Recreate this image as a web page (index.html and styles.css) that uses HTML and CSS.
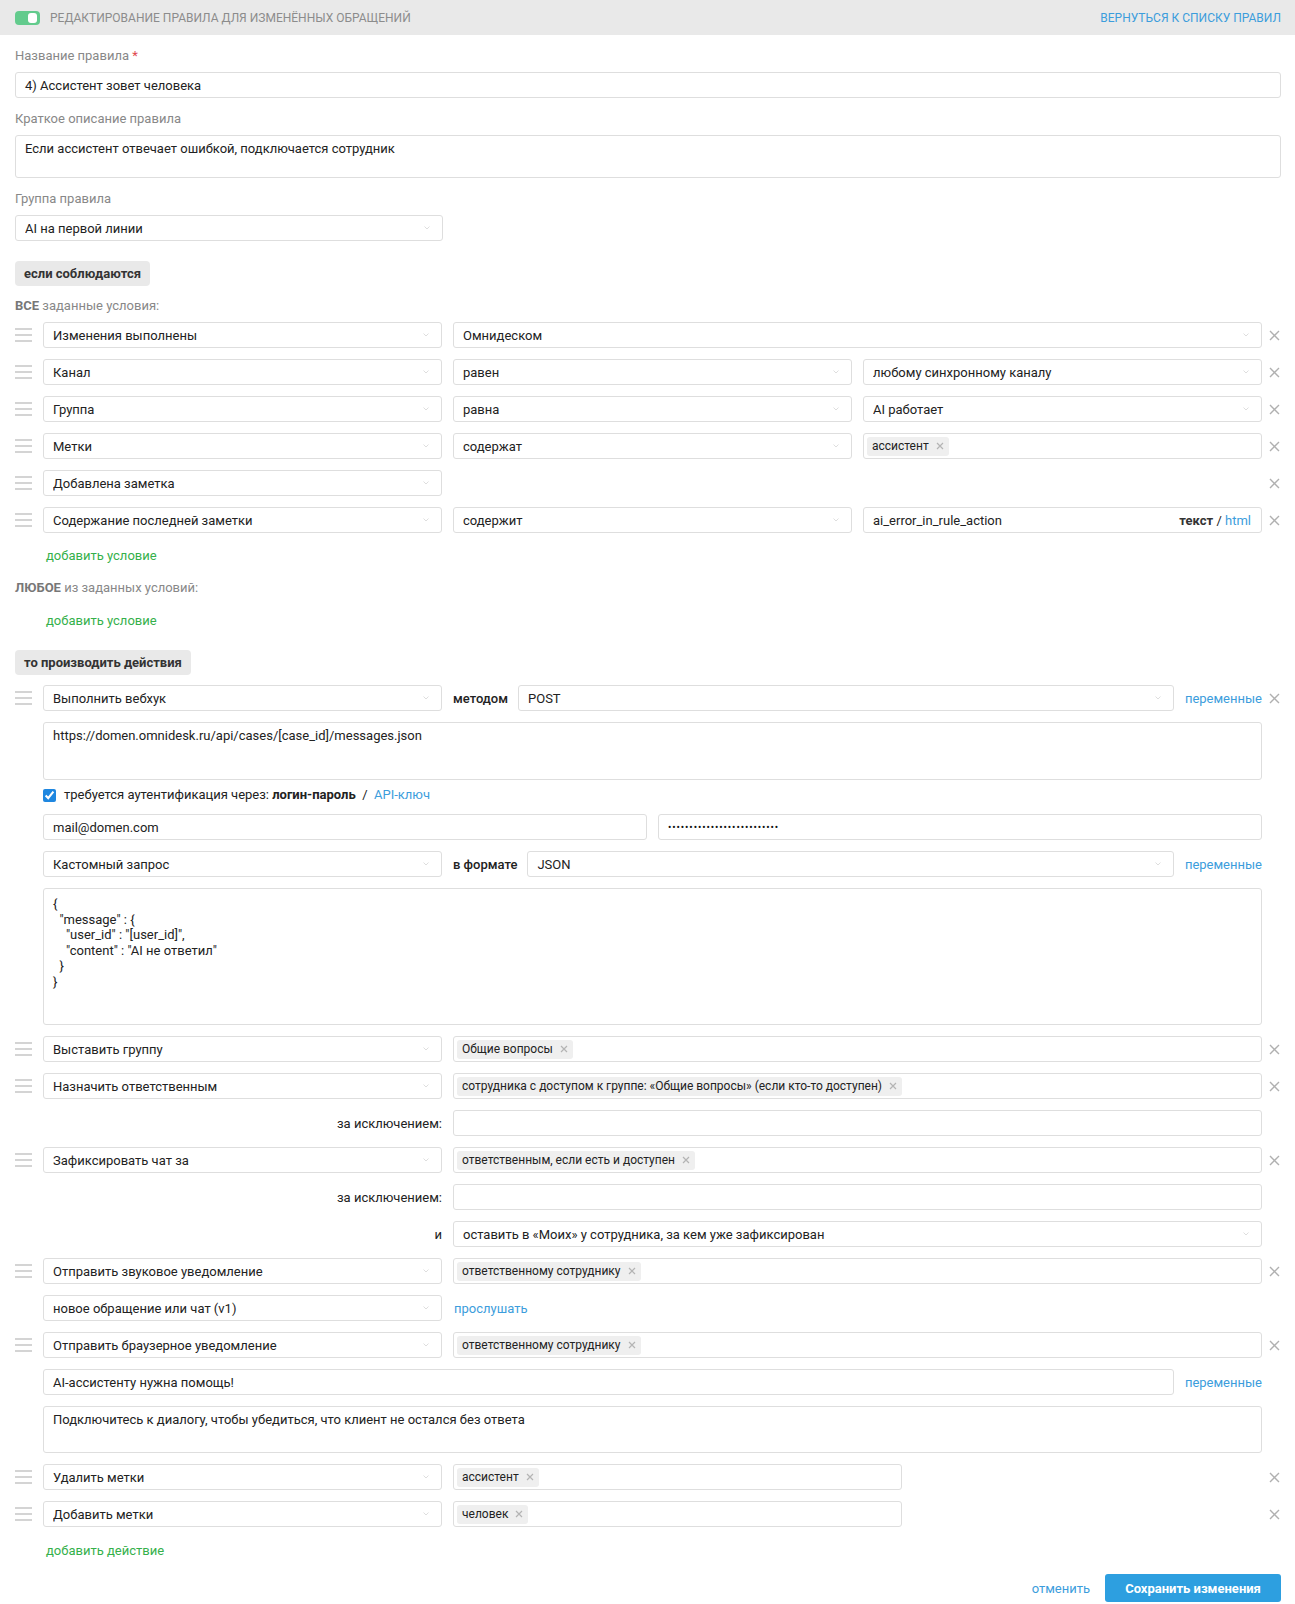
FILE: index.html
```html
<!DOCTYPE html>
<html lang="ru">
<head>
<meta charset="utf-8">
<title>Редактирование правила</title>
<link rel="stylesheet" href="styles.css">
</head>
<body>
<header class="topbar">
  <div class="topbar-left">
    <span class="toggle"></span>
    <span class="title">Редактирование правила для изменённых обращений</span>
  </div>
  <a class="back" href="#">Вернуться к списку правил</a>
</header>

<main class="page">
  <div class="label first">Название правила <span class="req">*</span></div>
  <div class="box">4) Ассистент зовет человека</div>

  <div class="label">Краткое описание правила</div>
  <div class="box area area-desc">Если ассистент отвечает ошибкой, подключается сотрудник</div>

  <div class="label">Группа правила</div>
  <div class="box select group-select"><span>AI на первой линии</span><svg class="chev" width="6" height="4" viewBox="0 0 6 4"><path d="M0.5 0.5L3 3L5.5 0.5"/></svg></div>

  <div class="badge badge-if">если соблюдаются</div>
  <div class="sub-label"><b>ВСЕ</b> заданные условия:</div>

  <div class="row row-first">
    <div class="handle"><i></i><i></i><i></i></div>
    <div class="cols">
      <div class="box select"><span>Изменения выполнены</span><svg class="chev" width="6" height="4" viewBox="0 0 6 4"><path d="M0.5 0.5L3 3L5.5 0.5"/></svg></div>
      <div class="box select span2"><span>Омнидеском</span><svg class="chev" width="6" height="4" viewBox="0 0 6 4"><path d="M0.5 0.5L3 3L5.5 0.5"/></svg></div>
    </div>
    <div class="rm"><svg width="11" height="11" viewBox="0 0 11 11"><path d="M1 1L10 10M10 1L1 10"/></svg></div>
  </div>

  <div class="row">
    <div class="handle"><i></i><i></i><i></i></div>
    <div class="cols">
      <div class="box select"><span>Канал</span><svg class="chev" width="6" height="4" viewBox="0 0 6 4"><path d="M0.5 0.5L3 3L5.5 0.5"/></svg></div>
      <div class="box select"><span>равен</span><svg class="chev" width="6" height="4" viewBox="0 0 6 4"><path d="M0.5 0.5L3 3L5.5 0.5"/></svg></div>
      <div class="box select"><span>любому синхронному каналу</span><svg class="chev" width="6" height="4" viewBox="0 0 6 4"><path d="M0.5 0.5L3 3L5.5 0.5"/></svg></div>
    </div>
    <div class="rm"><svg width="11" height="11" viewBox="0 0 11 11"><path d="M1 1L10 10M10 1L1 10"/></svg></div>
  </div>

  <div class="row">
    <div class="handle"><i></i><i></i><i></i></div>
    <div class="cols">
      <div class="box select"><span>Группа</span><svg class="chev" width="6" height="4" viewBox="0 0 6 4"><path d="M0.5 0.5L3 3L5.5 0.5"/></svg></div>
      <div class="box select"><span>равна</span><svg class="chev" width="6" height="4" viewBox="0 0 6 4"><path d="M0.5 0.5L3 3L5.5 0.5"/></svg></div>
      <div class="box select"><span>AI работает</span><svg class="chev" width="6" height="4" viewBox="0 0 6 4"><path d="M0.5 0.5L3 3L5.5 0.5"/></svg></div>
    </div>
    <div class="rm"><svg width="11" height="11" viewBox="0 0 11 11"><path d="M1 1L10 10M10 1L1 10"/></svg></div>
  </div>

  <div class="row">
    <div class="handle"><i></i><i></i><i></i></div>
    <div class="cols">
      <div class="box select"><span>Метки</span><svg class="chev" width="6" height="4" viewBox="0 0 6 4"><path d="M0.5 0.5L3 3L5.5 0.5"/></svg></div>
      <div class="box select"><span>содержат</span><svg class="chev" width="6" height="4" viewBox="0 0 6 4"><path d="M0.5 0.5L3 3L5.5 0.5"/></svg></div>
      <div class="box tags"><span class="tag">ассистент<svg width="8" height="8" viewBox="0 0 8 8"><path d="M1 1L7 7M7 1L1 7"/></svg></span></div>
    </div>
    <div class="rm"><svg width="11" height="11" viewBox="0 0 11 11"><path d="M1 1L10 10M10 1L1 10"/></svg></div>
  </div>

  <div class="row">
    <div class="handle"><i></i><i></i><i></i></div>
    <div class="cols">
      <div class="box select"><span>Добавлена заметка</span><svg class="chev" width="6" height="4" viewBox="0 0 6 4"><path d="M0.5 0.5L3 3L5.5 0.5"/></svg></div>
    </div>
    <div class="rm"><svg width="11" height="11" viewBox="0 0 11 11"><path d="M1 1L10 10M10 1L1 10"/></svg></div>
  </div>

  <div class="row">
    <div class="handle"><i></i><i></i><i></i></div>
    <div class="cols">
      <div class="box select"><span>Содержание последней заметки</span><svg class="chev" width="6" height="4" viewBox="0 0 6 4"><path d="M0.5 0.5L3 3L5.5 0.5"/></svg></div>
      <div class="box select"><span>содержит</span><svg class="chev" width="6" height="4" viewBox="0 0 6 4"><path d="M0.5 0.5L3 3L5.5 0.5"/></svg></div>
      <div class="box note-box"><span>ai_error_in_rule_action</span><span class="mode"><b>текст</b> / <a href="#">html</a></span></div>
    </div>
    <div class="rm"><svg width="11" height="11" viewBox="0 0 11 11"><path d="M1 1L10 10M10 1L1 10"/></svg></div>
  </div>

  <a class="add-link add-1" href="#">добавить условие</a>
  <div class="sub-label any"><b>ЛЮБОЕ</b> из заданных условий:</div>
  <a class="add-link add-2" href="#">добавить условие</a>

  <div class="badge badge-then">то производить действия</div>

  <div class="row row-first-action">
    <div class="handle"><i></i><i></i><i></i></div>
    <div class="line">
      <div class="box select col1"><span>Выполнить вебхук</span><svg class="chev" width="6" height="4" viewBox="0 0 6 4"><path d="M0.5 0.5L3 3L5.5 0.5"/></svg></div>
      <span class="inline-label">методом</span>
      <div class="box select grow"><span>POST</span><svg class="chev" width="6" height="4" viewBox="0 0 6 4"><path d="M0.5 0.5L3 3L5.5 0.5"/></svg></div>
      <a class="link" href="#">переменные</a>
    </div>
    <div class="rm"><svg width="11" height="11" viewBox="0 0 11 11"><path d="M1 1L10 10M10 1L1 10"/></svg></div>
  </div>

  <div class="sub">
    <div class="box area area-url">https://domen.omnidesk.ru/api/cases/[case_id]/messages.json</div>
  </div>

  <div class="sub auth">
    <input type="checkbox" checked>
    <span>требуется аутентификация через: <b>логин-пароль</b> &nbsp;/&nbsp; <a href="#">API-ключ</a></span>
  </div>

  <div class="sub sub-row two">
    <div class="box">mail@domen.com</div>
    <div class="box"><span class="dots">••••••••••••••••••••••••••</span></div>
  </div>

  <div class="sub sub-row">
    <div class="line">
      <div class="box select col1"><span>Кастомный запрос</span><svg class="chev" width="6" height="4" viewBox="0 0 6 4"><path d="M0.5 0.5L3 3L5.5 0.5"/></svg></div>
      <span class="inline-label">в формате</span>
      <div class="box select grow"><span>JSON</span><svg class="chev" width="6" height="4" viewBox="0 0 6 4"><path d="M0.5 0.5L3 3L5.5 0.5"/></svg></div>
      <a class="link" href="#">переменные</a>
    </div>
  </div>

  <div class="sub">
    <div class="box area area-json">{
  "message" : {
    "user_id" : "[user_id]",
    "content" : "AI не ответил"
  }
}</div>
  </div>

  <div class="row">
    <div class="handle"><i></i><i></i><i></i></div>
    <div class="cols">
      <div class="box select"><span>Выставить группу</span><svg class="chev" width="6" height="4" viewBox="0 0 6 4"><path d="M0.5 0.5L3 3L5.5 0.5"/></svg></div>
      <div class="box tags span2"><span class="tag">Общие вопросы<svg width="8" height="8" viewBox="0 0 8 8"><path d="M1 1L7 7M7 1L1 7"/></svg></span></div>
    </div>
    <div class="rm"><svg width="11" height="11" viewBox="0 0 11 11"><path d="M1 1L10 10M10 1L1 10"/></svg></div>
  </div>

  <div class="row">
    <div class="handle"><i></i><i></i><i></i></div>
    <div class="cols">
      <div class="box select"><span>Назначить ответственным</span><svg class="chev" width="6" height="4" viewBox="0 0 6 4"><path d="M0.5 0.5L3 3L5.5 0.5"/></svg></div>
      <div class="box tags span2"><span class="tag">сотрудника с доступом к группе: «Общие вопросы» (если кто-то доступен)<svg width="8" height="8" viewBox="0 0 8 8"><path d="M1 1L7 7M7 1L1 7"/></svg></span></div>
    </div>
    <div class="rm"><svg width="11" height="11" viewBox="0 0 11 11"><path d="M1 1L10 10M10 1L1 10"/></svg></div>
  </div>

  <div class="row">
    <div class="handle"></div>
    <div class="cols">
      <div class="row-label">за исключением:</div>
      <div class="box span2"></div>
    </div>
    <div class="rm"></div>
  </div>

  <div class="row">
    <div class="handle"><i></i><i></i><i></i></div>
    <div class="cols">
      <div class="box select"><span>Зафиксировать чат за</span><svg class="chev" width="6" height="4" viewBox="0 0 6 4"><path d="M0.5 0.5L3 3L5.5 0.5"/></svg></div>
      <div class="box tags span2"><span class="tag">ответственным, если есть и доступен<svg width="8" height="8" viewBox="0 0 8 8"><path d="M1 1L7 7M7 1L1 7"/></svg></span></div>
    </div>
    <div class="rm"><svg width="11" height="11" viewBox="0 0 11 11"><path d="M1 1L10 10M10 1L1 10"/></svg></div>
  </div>

  <div class="row">
    <div class="handle"></div>
    <div class="cols">
      <div class="row-label">за исключением:</div>
      <div class="box span2"></div>
    </div>
    <div class="rm"></div>
  </div>

  <div class="row">
    <div class="handle"></div>
    <div class="cols">
      <div class="row-label">и</div>
      <div class="box select span2"><span>оставить в «Моих» у сотрудника, за кем уже зафиксирован</span><svg class="chev" width="6" height="4" viewBox="0 0 6 4"><path d="M0.5 0.5L3 3L5.5 0.5"/></svg></div>
    </div>
    <div class="rm"></div>
  </div>

  <div class="row">
    <div class="handle"><i></i><i></i><i></i></div>
    <div class="cols">
      <div class="box select"><span>Отправить звуковое уведомление</span><svg class="chev" width="6" height="4" viewBox="0 0 6 4"><path d="M0.5 0.5L3 3L5.5 0.5"/></svg></div>
      <div class="box tags span2"><span class="tag">ответственному сотруднику<svg width="8" height="8" viewBox="0 0 8 8"><path d="M1 1L7 7M7 1L1 7"/></svg></span></div>
    </div>
    <div class="rm"><svg width="11" height="11" viewBox="0 0 11 11"><path d="M1 1L10 10M10 1L1 10"/></svg></div>
  </div>

  <div class="row">
    <div class="handle"></div>
    <div class="cols">
      <div class="box select"><span>новое обращение или чат (v1)</span><svg class="chev" width="6" height="4" viewBox="0 0 6 4"><path d="M0.5 0.5L3 3L5.5 0.5"/></svg></div>
      <a class="link listen" href="#">прослушать</a>
    </div>
    <div class="rm"></div>
  </div>

  <div class="row">
    <div class="handle"><i></i><i></i><i></i></div>
    <div class="cols">
      <div class="box select"><span>Отправить браузерное уведомление</span><svg class="chev" width="6" height="4" viewBox="0 0 6 4"><path d="M0.5 0.5L3 3L5.5 0.5"/></svg></div>
      <div class="box tags span2"><span class="tag">ответственному сотруднику<svg width="8" height="8" viewBox="0 0 8 8"><path d="M1 1L7 7M7 1L1 7"/></svg></span></div>
    </div>
    <div class="rm"><svg width="11" height="11" viewBox="0 0 11 11"><path d="M1 1L10 10M10 1L1 10"/></svg></div>
  </div>

  <div class="row">
    <div class="handle"></div>
    <div class="line">
      <div class="box grow">AI-ассистенту нужна помощь!</div>
      <a class="link" href="#">переменные</a>
    </div>
    <div class="rm"></div>
  </div>

  <div class="sub">
    <div class="box area area-msg">Подключитесь к диалогу, чтобы убедиться, что клиент не остался без ответа</div>
  </div>

  <div class="row">
    <div class="handle"><i></i><i></i><i></i></div>
    <div class="cols">
      <div class="box select"><span>Удалить метки</span><svg class="chev" width="6" height="4" viewBox="0 0 6 4"><path d="M0.5 0.5L3 3L5.5 0.5"/></svg></div>
      <div class="span2"><div class="box tags narrow"><span class="tag">ассистент<svg width="8" height="8" viewBox="0 0 8 8"><path d="M1 1L7 7M7 1L1 7"/></svg></span></div></div>
    </div>
    <div class="rm"><svg width="11" height="11" viewBox="0 0 11 11"><path d="M1 1L10 10M10 1L1 10"/></svg></div>
  </div>

  <div class="row">
    <div class="handle"><i></i><i></i><i></i></div>
    <div class="cols">
      <div class="box select"><span>Добавить метки</span><svg class="chev" width="6" height="4" viewBox="0 0 6 4"><path d="M0.5 0.5L3 3L5.5 0.5"/></svg></div>
      <div class="span2"><div class="box tags narrow"><span class="tag">человек<svg width="8" height="8" viewBox="0 0 8 8"><path d="M1 1L7 7M7 1L1 7"/></svg></span></div></div>
    </div>
    <div class="rm"><svg width="11" height="11" viewBox="0 0 11 11"><path d="M1 1L10 10M10 1L1 10"/></svg></div>
  </div>

  <a class="add-link add-action" href="#">добавить действие</a>

  <div class="footer">
    <a class="cancel" href="#">отменить</a>
    <button class="save" type="button">Сохранить изменения</button>
  </div>
</main>
</body>
</html>
```

FILE: styles.css
```css
* { box-sizing: border-box; }

body {
  margin: 0;
  font-family: Roboto, "Noto Sans", "Liberation Sans", sans-serif;
  font-size: 13px;
  color: #222;
  background: #fff;
}

a { text-decoration: none; }

.topbar {
  height: 35px;
  background: #e9e9e9;
  display: flex;
  align-items: center;
  justify-content: space-between;
  padding: 0 14px 0 15px;
  font-size: 12px;
}

.topbar-left {
  display: flex;
  align-items: center;
  gap: 10px;
}

.toggle {
  width: 25px;
  height: 14px;
  border-radius: 4px;
  background: #63cb8d;
  display: flex;
  justify-content: flex-end;
  align-items: center;
  padding-right: 3px;
}

.toggle::after {
  content: "";
  width: 9px;
  height: 10px;
  border-radius: 3px;
  background: #fff;
}

.title {
  color: #8c8c8c;
  text-transform: uppercase;
}

.back {
  color: #3c9ddc;
  text-transform: uppercase;
}

.page {
  padding: 0 14px 0 15px;
}

.label {
  color: #888;
  line-height: 16px;
  margin: 13px 0 8px;
}

.req { color: #e0464e; }

.box {
  height: 26px;
  border: 1px solid #dedede;
  border-radius: 3px;
  background: #fff;
  display: flex;
  align-items: center;
  padding: 0 9px;
  white-space: nowrap;
  overflow: hidden;
  min-width: 0;
}

.box.select > span {
  flex: 1;
  overflow: hidden;
}

.chev {
  flex: none;
  margin-left: 8px;
  margin-right: 3px;
}

.chev path {
  fill: none;
  stroke: #dadada;
  stroke-width: 0.9;
}

.area {
  height: auto;
  align-items: flex-start;
  padding: 5px 9px;
  line-height: 16px;
  white-space: pre;
}

.area-desc { height: 43px; }
.area-url { height: 58px; }
.area-json { height: 137px; line-height: 15.6px; padding-top: 7px; }
.area-msg { height: 47px; }

.group-select { width: 428px; }

.badge {
  display: inline-block;
  height: 25px;
  line-height: 25px;
  padding: 0 9px;
  background: #e9e9e9;
  border-radius: 4px;
  font-weight: 700;
  color: #333;
}

.badge-if { margin-top: 20px; }
.badge-then { margin-top: 21px; }

.sub-label {
  color: #888;
  line-height: 16px;
  margin-top: 12px;
}

.sub-label b { color: #777; }

.sub-label.any { margin-top: 16px; }

.row {
  display: flex;
  align-items: center;
  height: 26px;
  margin-top: 11px;
}

.row-first { margin-top: 8px; }
.row-first-action { margin-top: 10px; }

.handle {
  width: 28px;
  flex: none;
  display: flex;
  flex-direction: column;
  gap: 4px;
}

.handle i {
  display: block;
  width: 17px;
  height: 2px;
  background: #d4d4d4;
}

.cols {
  flex: 1;
  display: grid;
  grid-template-columns: repeat(3, 1fr);
  column-gap: 11px;
  align-items: center;
  min-width: 0;
}

.span2 { grid-column: span 2; }

.rm {
  width: 19px;
  flex: none;
  display: flex;
  justify-content: flex-end;
  padding-right: 1px;
}

.rm path {
  stroke: #b0b0b0;
  stroke-width: 1.4;
}

.tags {
  padding: 0 3px;
}

.tag {
  display: inline-flex;
  align-items: center;
  height: 19px;
  padding: 0 5px;
  background: #efefef;
  border-radius: 3px;
  font-size: 12px;
  color: #222;
  gap: 7px;
}

.tag path {
  stroke: #b4b4b4;
  stroke-width: 1.2;
}

.narrow { width: 449px; }

.note-box { justify-content: space-between; padding-right: 10px; }

.mode b { font-weight: 700; color: #333; }
.mode a { color: #3c9ddc; }

.add-link {
  display: block;
  color: #35b04b;
  line-height: 16px;
  margin-left: 31px;
}

.add-1 { margin-top: 15px; }
.add-2 { margin-top: 17px; }
.add-action { margin-top: 16px; }

.line {
  flex: 1;
  display: flex;
  align-items: center;
  gap: 10px;
  min-width: 0;
}

.col1 {
  flex: none;
  width: 399px;
  margin-right: 1px;
}

.grow { flex: 1; }

.inline-label {
  font-weight: 500;
  color: #222;
}

.link {
  color: #3c9ddc;
  margin-left: 1px;
}

.listen { justify-self: start; }

.row-label {
  text-align: right;
  color: #222;
}

.sub {
  padding: 0 19px 0 28px;
  margin-top: 11px;
}

.sub-row {
  display: flex;
  height: 26px;
}

.sub-row .line { flex: 1; }

.two {
  display: grid;
  grid-template-columns: 1fr 1fr;
  column-gap: 11px;
}

.dots {
  font-size: 10px;
  letter-spacing: 0.9px;
  color: #111;
}

.auth {
  margin-top: 7px;
  display: flex;
  align-items: center;
  gap: 8px;
  line-height: 16px;
  color: #222;
}

.auth input {
  margin: 0;
  width: 13px;
  height: 13px;
  accent-color: #1f87e0;
}

.auth b { font-weight: 700; }
.auth a { color: #3c9ddc; }

.footer {
  display: flex;
  justify-content: flex-end;
  align-items: center;
  gap: 15px;
  margin-top: 15px;
  padding-bottom: 1px;
}

.cancel { color: #3c9ddc; }

.save {
  height: 28px;
  width: 176px;
  border: none;
  border-radius: 3px;
  background: #2d9fe0;
  color: #fff;
  font-family: inherit;
  font-size: 13px;
  font-weight: 700;
  padding: 0;
}
```
